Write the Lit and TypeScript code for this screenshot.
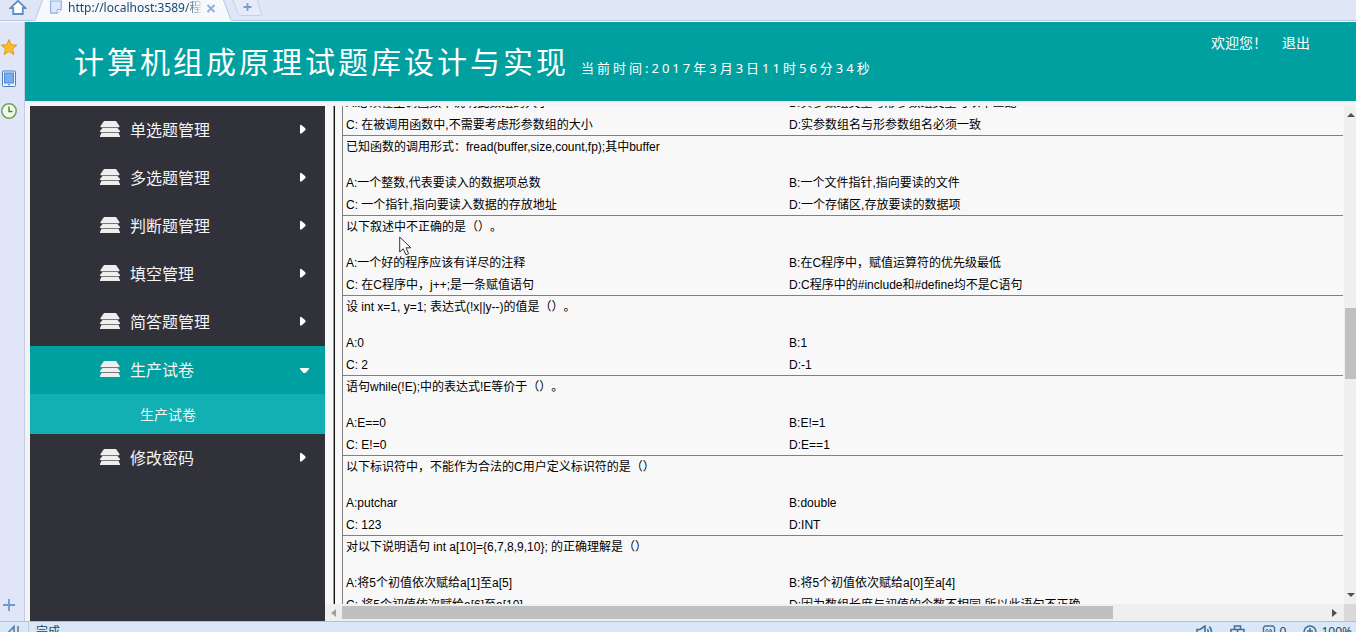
import { LitElement, html, css, svg } from "lit";
import { customElement } from "lit/decorators.js";
import { classMap } from "lit/directives/class-map.js";

interface Question {
  text: string;
  options: [string, string, string, string];
}

interface MenuItem {
  label: string;
  children?: string[];
}

const MENU: MenuItem[] = [
  { label: "单选题管理" },
  { label: "多选题管理" },
  { label: "判断题管理" },
  { label: "填空管理" },
  { label: "简答题管理" },
  { label: "生产试卷", children: ["生产试卷"] },
  { label: "修改密码" },
];

const QUESTIONS: Question[] = [
  {
    text: "",
    options: [
      "A:必须在主调函数中说明此数组的大小",
      "B:实参数组类型与形参数组类型可以不匹配",
      "C: 在被调用函数中,不需要考虑形参数组的大小",
      "D:实参数组名与形参数组名必须一致",
    ],
  },
  {
    text: "已知函数的调用形式：fread(buffer,size,count,fp);其中buffer",
    options: [
      "A:一个整数,代表要读入的数据项总数",
      "B:一个文件指针,指向要读的文件",
      "C: 一个指针,指向要读入数据的存放地址",
      "D:一个存储区,存放要读的数据项",
    ],
  },
  {
    text: "以下叙述中不正确的是（）。",
    options: [
      "A:一个好的程序应该有详尽的注释",
      "B:在C程序中，赋值运算符的优先级最低",
      "C: 在C程序中，j++;是一条赋值语句",
      "D:C程序中的#include和#define均不是C语句",
    ],
  },
  {
    text: "设 int x=1, y=1; 表达式(!x||y--)的值是（）。",
    options: ["A:0", "B:1", "C: 2", "D:-1"],
  },
  {
    text: "语句while(!E);中的表达式!E等价于（）。",
    options: ["A:E==0", "B:E!=1", "C: E!=0", "D:E==1"],
  },
  {
    text: "以下标识符中，不能作为合法的C用户定义标识符的是（）",
    options: ["A:putchar", "B:double", "C: 123", "D:INT"],
  },
  {
    text: "对以下说明语句 int a[10]={6,7,8,9,10}; 的正确理解是（）",
    options: [
      "A:将5个初值依次赋给a[1]至a[5]",
      "B:将5个初值依次赋给a[0]至a[4]",
      "C: 将5个初值依次赋给a[6]至a[10]",
      "D:因为数组长度与初值的个数不相同,所以此语句不正确",
    ],
  },
];

@customElement("browser-tabs")
class BrowserTabs extends LitElement {
  static styles = css`
    :host {
      display: block;
      height: 22px;
      box-sizing: border-box;
      background: #dfe6f6;
      border-bottom: 1px solid #f7f9fe;
      font: 12px/16px "Noto Sans", "Noto Sans CJK SC", sans-serif;
      color: #17496f;
    }
    .bar {
      display: flex;
      height: 21px;
      box-sizing: border-box;
      border-bottom: 1px solid #b9c7e2;
      padding-left: 9px;
    }
    button {
      border: 0;
      padding: 0;
      background: none;
      display: block;
      height: 16px;
    }
    svg { display: block; }
    .home { margin-right: 8px; }
    .tab {
      display: flex;
      height: 21px;
      width: 196px;
    }
    .face {
      display: flex;
      flex: 1;
      min-width: 0;
      background: #f7f9fd;
      padding-left: 6px;
    }
    .name {
      flex: 1;
      overflow: hidden;
      white-space: nowrap;
      margin-left: 6px;
      -webkit-mask-image: linear-gradient(90deg, #000 118px, transparent 136px);
      mask-image: linear-gradient(90deg, #000 118px, transparent 136px);
    }
    .close { margin: 0 6px 0 2px; }
  `;
  render() {
    return html`
      <nav class="bar" aria-label="tabs">
        <button class="home" aria-label="home">
          <svg width="18" height="16" viewBox="0 0 18 16">
            <path d="M1.5 8 9 .8 16.500 8H13.800V14H4.200V8Z" fill="#fff" stroke="#5f8fc4" stroke-width="1.800" />
          </svg>
        </button>
        <div class="tab">
          <svg width="9" height="21"><path d="M0 20 8 0H9V21H0Z" fill="#f7f9fd" /><path d="M0 20 7.500 0" stroke="#b9c7e2" fill="none" /></svg>
          <div class="face">
            <svg width="12" height="15" viewBox="0 0 12 15">
              <path d="M.6 1V13.200H7L11.200 9.500V1Z" fill="#dce9fb" stroke="#8fb0e4" stroke-width="1.200" />
              <path d="M7 13.200V9.500H11.200" fill="#fff" stroke="#8fb0e4" />
            </svg>
            <span class="name">http://localhost:3589/程</span>
            <button class="close" aria-label="close">
              <svg width="10" height="14"><path d="M1.500 4 8.500 11M8.500 4 1.500 11" stroke="#92ade0" stroke-width="2" /></svg>
            </button>
          </div>
          <svg width="9" height="21"><path d="M0 0H1L9 20V21H0Z" fill="#f7f9fd" /><path d="M1.500 0 9 20" stroke="#b9c7e2" fill="none" /></svg>
        </div>
        <button aria-label="new tab">
          <svg width="32" height="16">
            <path d="M2 0 7 13.500Q8 15.500 10 15.500H29Q31 15.500 30.500 13.500L26 0" fill="#e5ebf8" stroke="#c6d1ea" />
            <path d="M16.500 3V11M12.500 7H20.500" stroke="#7d9dd0" stroke-width="1.800" />
          </svg>
        </button>
      </nav>
    `;
  }
}

@customElement("side-rail")
class SideRail extends LitElement {
  static styles = css`
    :host {
      display: flex;
      flex-direction: column;
      justify-content: space-between;
      width: 25px;
      box-sizing: border-box;
      background: #e0e6f7;
      border-right: 1px solid #c3cee6;
      padding: 16px 0 8px 0;
    }
    .group { display: grid; gap: 14px; }
    button { border: 0; padding: 0; background: none; display: block; width: 18px; height: 18px; }
    svg { display: block; }
  `;
  render() {
    return html`
      <div class="group">
        <button aria-label="favorites">
          <svg width="18" height="18"><path d="M9 1.500 11.200 6.700 16.800 7.200 12.500 10.900 13.900 16.500 9 13.500 4.100 16.500 5.500 10.900 1.200 7.200 6.800 6.700Z" fill="#f8bd2a" stroke="#e09d14" /></svg>
        </button>
        <button aria-label="phone">
          <svg width="18" height="18"><rect x="2.500" y="1" width="13" height="15.500" rx="1" fill="#eef5ff" stroke="#487fbd" /><rect x="4.500" y="3" width="9" height="10" fill="#77aef0" stroke="#5288cf" /><path d="M8 14.800H10" stroke="#487fbd" /></svg>
        </button>
        <button aria-label="history">
          <svg width="18" height="18"><circle cx="9" cy="9" r="7.200" fill="#f4faef" stroke="#71a65b" stroke-width="1.600" /><path d="M9 4.500V9.500H12.500" fill="none" stroke="#488634" stroke-width="1.400" /></svg>
        </button>
      </div>
      <button aria-label="add">
        <svg width="18" height="18"><path d="M9 4V16M3 10H15" stroke="#7297cc" stroke-width="1.800" /></svg>
      </button>
    `;
  }
}

@customElement("side-menu")
class SideMenu extends LitElement {
  static styles = css`
    :host {
      display: block;
      width: 295px;
      background: #313139;
      font: 16px/46px "Noto Sans CJK SC", sans-serif;
    }
    ul { list-style: none; margin: 0; padding: 0; }
    a { color: #f4f4f4; text-decoration: none; }
    .item {
      display: flex;
      align-items: center;
      height: 48px;
      box-sizing: border-box;
      padding: 0 15px 2px 70px;
    }
    .open { background: #00a0a0; }
    .label { flex: 1; margin-left: 10px; }
    .sub {
      display: block;
      height: 40px;
      padding-left: 110px;
      background: #12b0b2;
      font-size: 14px;
      line-height: 41px;
    }
    svg { display: block; }
  `;
  render() {
    return html`
      <ul>
        ${MENU.map(
          (item) => html`
            <li>
              <a href="#" class=${classMap({ item: true, open: !!item.children })}>
                <svg width="20" height="18" viewBox="0 0 20 18">
                  <path d="M4 1H16L19.500 6V7H.5V6ZM2.500 8H17.500L20 11V12H0V11ZM1.500 13H18.500L20 16V17H0V16Z" fill="#eee" />
                  <path d="M1 7.500H19M1 12.500H19" stroke="#777" />
                </svg>
                <span class="label">${item.label}</span>
                <svg width="10" height="12">
                  ${item.children
                    ? svg`<path d="M0 5H9V6L5.500 10H3.500L0 6Z" fill="#fff" />`
                    : svg`<path d="M0 2H1.500L5.500 5.500V7L1.500 10.500H0Z" fill="#fff" />`}
                </svg>
              </a>
              ${(item.children ?? []).map((child) => html`<a href="#" class="sub">${child}</a>`)}
            </li>
          `
        )}
      </ul>
    `;
  }
}

@customElement("question-frame")
class QuestionFrame extends LitElement {
  static styles = css`
    :host {
      display: grid;
      grid-template: 1fr 17px / 1fr 12px;
      flex: 1;
      min-width: 0;
      min-height: 0;
      background: #f8f8f8;
      font: 12px/22px "Liberation Sans", "Noto Sans CJK SC", sans-serif;
      text-spacing-trim: space-all;
      color: #000;
    }
    .view {
      display: flex;
      min-height: 0;
      overflow: hidden;
      margin-left: 8px;
      margin-right: 1px;
      border-left: 1px solid #9a9a9a;
    }
    .list {
      flex: 1;
      border-left: 1px solid #111;
      padding-left: 7px;
      height: max-content;
    }
    .question {
      height: 80px;
      box-sizing: border-box;
      border-left: 1px solid #808080;
      border-bottom: 1px solid #808080;
      padding-left: 3px;
      white-space: nowrap;
    }
    .text { margin: 0; height: 36px; }
    .options {
      display: grid;
      grid-template-columns: 4fr 5fr;
      grid-auto-rows: 22px;
    }
    .track { background: #efefef; display: flex; }
    .vertical {
      flex-direction: column;
      align-items: flex-end;
      padding: 7px 1px 7px 0;
    }
    .across { align-items: center; padding: 0 7px 0 6px; }
    .run { flex: 1; display: flex; }
    .vertical .run { flex-direction: column; width: 11px; margin-right: -1px; }
    .across .run { height: 13px; margin: 0 9px 0 6px; }
    .lead-y { flex: 190; }
    .thumb-y { flex: 71; background: #c0c0c0; }
    .tail-y { flex: 213; }
    .thumb-x { flex: 771; background: #c0c0c0; }
    .tail-x { flex: 210; }
    .corner { background: #d9d9d9; }
    svg { display: block; }
  `;
  firstUpdated() {
    const view = this.renderRoot.querySelector(".view");
    if (view) view.scrollTop = 50;
  }
  render() {
    return html`
      <div class="view">
        <div class="list">
          ${QUESTIONS.map(
            (q) => html`
              <section class="question">
                <p class="text">${q.text}</p>
                <div class="options">${q.options.map((o) => html`<span>${o}</span>`)}</div>
              </section>
            `
          )}
        </div>
      </div>
      <div class="track vertical">
        <svg width="8" height="4"><path d="M4 0 8 4H0Z" fill="#505050" /></svg>
        <div class="run"><div class="lead-y"></div><div class="thumb-y"></div><div class="tail-y"></div></div>
        <svg width="8" height="4"><path d="M0 0H8L4 4Z" fill="#505050" /></svg>
      </div>
      <div class="track across">
        <svg width="5" height="8"><path d="M5 0V8L0 4Z" fill="#a0a0a0" /></svg>
        <div class="run"><div class="thumb-x"></div><div class="tail-x"></div></div>
        <svg width="5" height="8"><path d="M0 0V8L5 4Z" fill="#505050" /></svg>
      </div>
      <div class="corner"></div>
    `;
  }
}

@customElement("status-bar")
class StatusBar extends LitElement {
  static styles = css`
    :host {
      display: flex;
      height: 11px;
      box-sizing: border-box;
      overflow: hidden;
      border-top: 1px solid #adc0e0;
      background: #d9e7f7;
      font: 12px/20px "Noto Sans", "Noto Sans CJK SC", sans-serif;
      color: #17496f;
    }
    .mark { width: 29px; border-right: 1px solid #bccfe9; padding-left: 6px; box-sizing: border-box; height: 18px; }
    .done { flex: 1; padding-left: 7px; }
    .tools { display: flex; padding-right: 4px; }
    .tool { display: flex; gap: 4px; margin-left: 17px; }
    svg { display: block; margin-top: 3px; }
  `;
  render() {
    return html`
      <div class="mark"><svg width="14" height="14" fill="none" stroke="#5680a8" stroke-width="1.600"><path d="M1 9 8 1.500V9ZM12 1V12" /></svg></div>
      <span class="done">完成</span>
      <div class="tools">
        <span class="tool">
          <svg width="17" height="14" fill="none" stroke="#43719c" stroke-width="1.600"><path d="M1 4.500H4L9 1V13L4 9.500H1ZM11.500 4Q13 7 11.500 10M13.500 1.500Q17.500 7 13.500 12" /></svg>
        </span>
        <span class="tool">
          <svg width="15" height="14" fill="none" stroke="#43719c" stroke-width="1.600"><path d="M4.500 4V1H10.500V4M1 4.500H14V12H1ZM7.500 5V9" /></svg>
        </span>
        <span class="tool">
          <svg width="14" height="14" fill="none" stroke="#43719c" stroke-width="1.400"><path d="M3 1H11L12.500 2.500V9Q12 12 7 13Q2 12 1.500 9V2.500Z" /><path d="M4 9V5.500L5 4 6.200 5.500V9M4 7.500H6M8 4.500V9H9Q10.500 7 9 4.500Z" stroke-width="1" /></svg>
          0
        </span>
        <span class="tool">
          <svg width="14" height="14" fill="none" stroke="#43719c" stroke-width="1.600"><circle cx="7" cy="7" r="6" /><path d="M7 3V9M4 6H10" /></svg>
          100%
        </span>
      </div>
    `;
  }
}

@customElement("app-root")
class AppRoot extends LitElement {
  static styles = css`
    :host {
      display: flex;
      flex-direction: column;
      height: 100vh;
      overflow: hidden;
      position: relative;
      background: #f3f3f3;
      font-family: "Noto Sans CJK SC", sans-serif;
    }
    .middle { flex: 1; display: flex; min-height: 0; }
    .page { flex: 1; min-width: 0; display: flex; flex-direction: column; }
    .banner {
      display: flex;
      height: 79px;
      box-sizing: border-box;
      background: #00a0a0;
      color: #fff;
      padding: 0 46px 0 49px;
    }
    .brand {
      flex: 1;
      display: flex;
      align-items: baseline;
      letter-spacing: 3px;
      white-space: nowrap;
    }
    h1 { margin: 0; font-size: 30px; font-weight: 400; line-height: 76px; }
    .time { font-family: "Noto Sans", "Noto Sans CJK SC", sans-serif; font-size: 13px; margin-left: 12px; }
    .account { display: flex; gap: 15px; font-size: 14px; line-height: 40px; }
    .account a { color: #fff; text-decoration: none; }
    .body { flex: 1; display: flex; min-height: 0; padding: 5px 0 0 5px; }
    .pointer { position: absolute; left: 399px; top: 236px; }
  `;
  render() {
    return html`
      <browser-tabs></browser-tabs>
      <div class="middle">
        <side-rail></side-rail>
        <div class="page">
          <header class="banner">
            <div class="brand">
              <h1>计算机组成原理试题库设计与实现</h1>
              <span class="time">当前时间:2017年3月3日11时56分34秒</span>
            </div>
            <div class="account"><span>欢迎您！</span><a href="#">退出</a></div>
          </header>
          <div class="body">
            <side-menu></side-menu>
            <question-frame></question-frame>
          </div>
        </div>
      </div>
      <status-bar></status-bar>
      <svg class="pointer" width="13" height="20" viewBox="0 0 13 20">
        <path d="M.7 1V16L4.200 12.800 7 18.800 9.600 17.600 7 11.800H11.800Z" fill="#fff" stroke="#333344" />
      </svg>
    `;
  }
}
